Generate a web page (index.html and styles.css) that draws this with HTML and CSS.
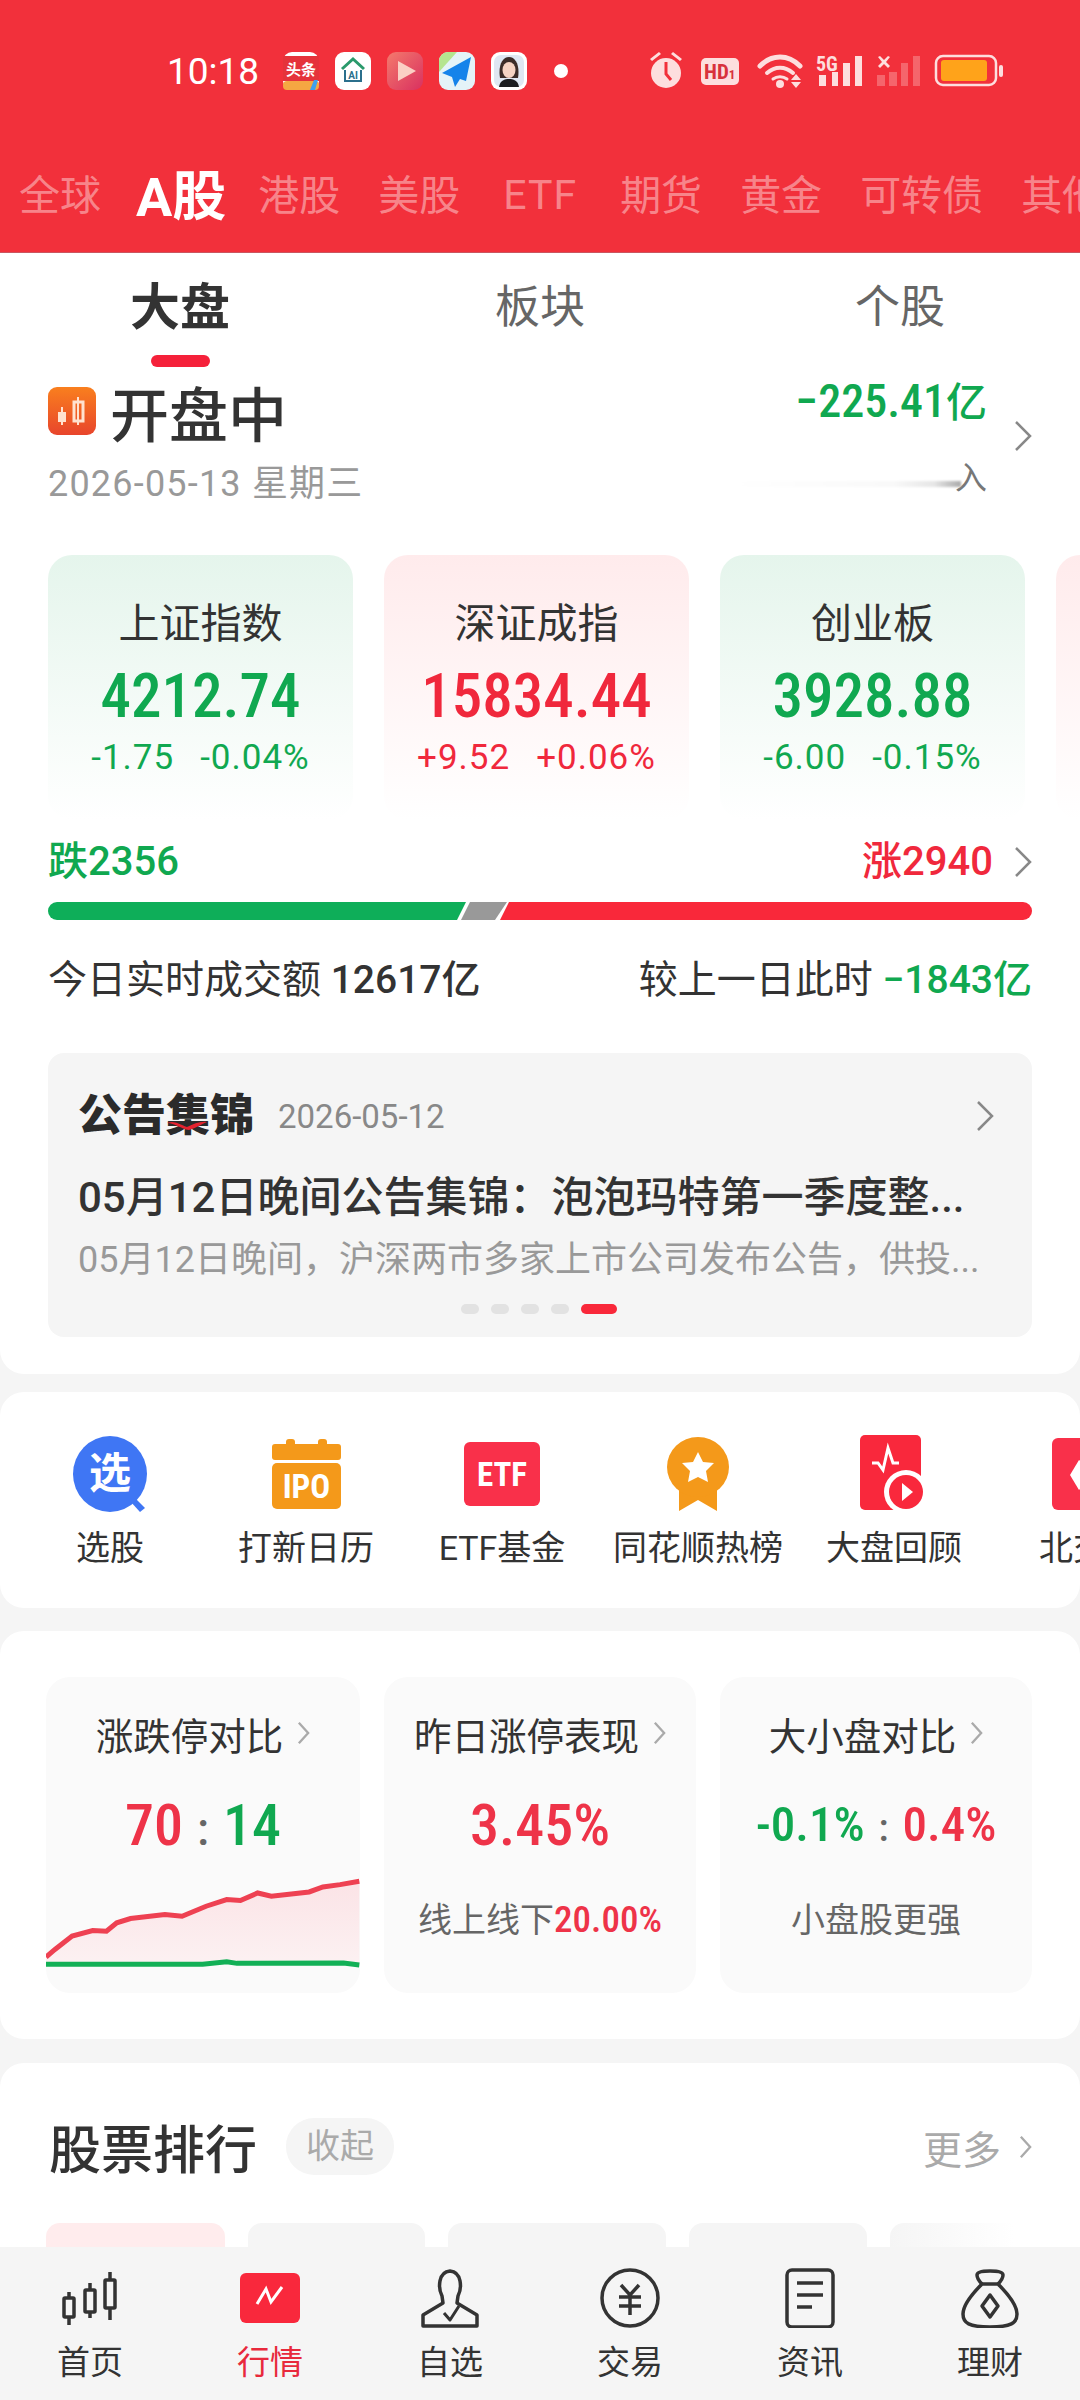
FILE: index.html
```html
<!DOCTYPE html>
<html lang="zh-CN">
<head>
  <meta charset="UTF-8">
  <title>行情</title>
  <link rel="stylesheet" href="styles.css">
</head>
<body>

<div class="main">

  <div class="header">
    <div class="status">
      <span class="time">10:18</span>
      <svg class="app" viewBox="0 0 36 38">
        <rect width="36" height="38" rx="9" fill="#fff"/>
        <rect y="4" width="36" height="25" fill="#e5333b"/>
        <text x="18" y="23" class="app-text" fill="#fff">头条</text>
        <rect y="29" width="36" height="9" rx="4" fill="#f5a742"/>
        <path d="M31 28l-4 10h5l3-10z" fill="#3fa0ef"/>
      </svg>
      <svg class="app" viewBox="0 0 36 38">
        <rect width="36" height="38" rx="9" fill="#fff"/>
        <path d="M7 17L18 7l11 10" fill="none" stroke="#2a9a6b" stroke-width="3"/>
        <path d="M10 18v11h16V18" fill="none" stroke="#2b6f8c" stroke-width="2"/>
        <text x="18" y="27" class="app-ai" fill="#2b6f8c">AI</text>
      </svg>
      <svg class="app" viewBox="0 0 36 38">
        <defs>
          <linearGradient id="playBg" x1="0" y1="0" x2="1" y2="1">
            <stop offset="0" stop-color="#f47a6c"/>
            <stop offset="1" stop-color="#d93060"/>
          </linearGradient>
        </defs>
        <rect width="36" height="38" rx="9" fill="url(#playBg)"/>
        <path d="M11 9l18 10-18 10z" fill="#fbcfc4"/>
      </svg>
      <svg class="app" viewBox="0 0 36 38">
        <rect width="36" height="38" rx="9" fill="#e4f3f8"/>
        <path d="M0 9a9 9 0 0 1 9-9h9L0 20z" fill="#b5e58f"/>
        <path d="M32 5L3 21l10 4 3 10 5-8 6 2z" fill="#1583ea"/>
      </svg>
      <svg class="app" viewBox="0 0 36 38">
        <rect width="36" height="38" rx="9" fill="#fff"/>
        <rect x="3" y="3" width="30" height="32" rx="7" fill="#dfe7f2"/>
        <path d="M9 26c-2-12 2-21 9-21s11 9 9 21z" fill="#3c2c28"/>
        <ellipse cx="18" cy="18" rx="6.5" ry="8" fill="#f5d3c3"/>
        <path d="M8 35c1-7 6-8 10-8s9 1 10 8z" fill="#1c1c1f"/>
      </svg>
      <span class="status-dot"></span>
      <svg class="status-right" viewBox="650 52 354 38">
        <g fill="#fddede">
          <circle cx="666" cy="73" r="15"/>
          <path d="M652 61l9-7-2-2-9 7zM680 61l-9-7 2-2 9 7z"/>
          <rect x="701" y="58" width="38" height="27" rx="5"/>
          <circle cx="780" cy="84" r="4"/>
          <path d="M796 74l5 6h-10zM796 88l5-6h-10z"/>
          <rect x="819" y="75" width="7" height="11"/>
          <rect x="832" y="72" width="6" height="14"/>
          <rect x="843" y="63" width="7" height="23"/>
          <rect x="855" y="56" width="7" height="30"/>
          <path d="M878 57l2-1 4 4 4-4 2 1-4 5 4 4-2 2-4-4-4 4-2-2 4-4z"/>
        </g>
        <path d="M666 62v12l5 6" fill="none" stroke="#f2303b" stroke-width="3"/>
        <text x="704" y="79" class="status-hd" fill="#d8323c">HD<tspan class="status-hd-sub">1</tspan></text>
        <text x="816" y="71" class="status-5g" fill="#fddede">5G</text>
        <g fill="none" stroke="#fddede" stroke-linecap="round">
          <path d="M760 66c12-12 28-12 40 0" stroke-width="5"/>
          <path d="M767 73c8-7 18-7 26 0" stroke-width="4"/>
          <path d="M773 79c4-3 10-3 14 0" stroke-width="3"/>
        </g>
        <g fill="#fddede" opacity=".3">
          <rect x="877" y="75" width="8" height="11"/>
          <rect x="889" y="72" width="8" height="14"/>
          <rect x="901" y="63" width="7" height="23"/>
          <rect x="913" y="56" width="7" height="30"/>
        </g>
        <rect x="936" y="56" width="60" height="29" rx="7" fill="none" stroke="#fddede" stroke-width="2.5"/>
        <rect x="941" y="60" width="46" height="21" rx="3" fill="#ffa31a"/>
        <rect x="999" y="65" width="4" height="12" rx="2" fill="#fddede"/>
      </svg>
    </div>
    <div class="market-tabs">
      <span>全球</span>
      <span class="on">A股</span>
      <span>港股</span>
      <span>美股</span>
      <span class="etf">ETF</span>
      <span>期货</span>
      <span>黄金</span>
      <span>可转债</span>
      <span>其他</span>
    </div>
  </div>

  <div class="sheet sheet-first">
    <div class="sub-tabs">
      <div class="sub-tab on">大盘<i></i></div>
      <div class="sub-tab">板块</div>
      <div class="sub-tab">个股</div>
    </div>

    <div class="open-row">
      <div>
        <div class="open-title">
          <svg class="open-icon" viewBox="0 0 48 48">
            <defs>
              <linearGradient id="openBg" x1="0" y1="0" x2="0" y2="1">
                <stop offset="0" stop-color="#f97f1e"/>
                <stop offset="1" stop-color="#e8452c"/>
              </linearGradient>
            </defs>
            <rect width="48" height="48" rx="9" fill="url(#openBg)"/>
            <path d="M14 20v18M30 10v28" stroke="#ffe2cf" stroke-width="2"/>
            <rect x="10" y="25" width="8" height="10" fill="#ffe2cf"/>
            <rect x="26" y="15" width="9" height="19" fill="none" stroke="#ffe2cf" stroke-width="3"/>
          </svg>
          开盘中
        </div>
        <div class="open-date">2026-05-13 星期三</div>
      </div>
      <div class="flow">
        <div class="flow-value"><span class="num flow-num">−225.41</span>亿</div>
        <div class="flow-label"><i></i>入</div>
      </div>
      <svg class="chev chev-flow" viewBox="0 0 18 32"><path d="M2 2l14 14L2 30"/></svg>
    </div>

    <div class="index-row">
      <div class="index-card down">
        <div class="index-name">上证指数</div>
        <div class="index-value num">4212.74</div>
        <div class="index-sub"><span>-1.75</span><span>-0.04%</span></div>
      </div>
      <div class="index-card up">
        <div class="index-name">深证成指</div>
        <div class="index-value num">15834.44</div>
        <div class="index-sub"><span>+9.52</span><span>+0.06%</span></div>
      </div>
      <div class="index-card down">
        <div class="index-name">创业板</div>
        <div class="index-value num">3928.88</div>
        <div class="index-sub"><span>-6.00</span><span>-0.15%</span></div>
      </div>
      <div class="index-card up"></div>
    </div>

    <div class="count-row">
      <span class="green">跌2356</span>
      <span class="count-right">
        <span class="red">涨2940</span>
        <svg class="chev" viewBox="0 0 18 32"><path d="M2 2l14 14L2 30"/></svg>
      </span>
    </div>
    <div class="ratio-bar">
      <div class="ratio-down" style="width:418px"></div>
      <div class="ratio-flat" style="width:49px"></div>
      <div class="ratio-up"></div>
    </div>

    <div class="turnover">
      <span>今日实时成交额 <b>12617亿</b></span>
      <span>较上一日此时 <b class="green">−1843亿</b></span>
    </div>

    <div class="notice">
      <div class="notice-head">
        <span class="notice-title">公告集锦<svg class="notice-swoosh" viewBox="0 0 42 10"><path d="M1 3c7-3 12 1 20 4 7-3 13-6 20-5-5 2-11 6-18 8C15 9 9 3 1 3z"/></svg></span>
        <span class="notice-date">2026-05-12</span>
        <svg class="chev" viewBox="0 0 18 32"><path d="M2 2l14 14L2 30"/></svg>
      </div>
      <div class="notice-line">05月12日晚间公告集锦：泡泡玛特第一季度整...</div>
      <div class="notice-desc">05月12日晚间，沪深两市多家上市公司发布公告，供投...</div>
      <div class="dots"><i></i><i></i><i></i><i></i><i class="on"></i></div>
    </div>
  </div>

  <div class="sheet shortcuts">
    <div class="shortcut">
      <div class="shortcut-icon">
        <svg width="75" height="76" viewBox="0 0 75 76">
          <path d="M62 62l10 10-5 4-10-11z" fill="#3f76f4"/>
          <ellipse cx="37" cy="38" rx="37" ry="38" fill="#3f76f4"/>
          <text x="37" y="52" class="shortcut-xuan" fill="#fff">选</text>
        </svg>
      </div>
      <div class="shortcut-label">选股</div>
    </div>
    <div class="shortcut">
      <div class="shortcut-icon">
        <svg width="69" height="70" viewBox="0 0 69 70">
          <rect x="14" y="0" width="9" height="10" rx="3" fill="#f4991a"/>
          <rect x="46" y="0" width="9" height="10" rx="3" fill="#f4991a"/>
          <rect y="5" width="69" height="16" rx="3" fill="#f4991a"/>
          <rect y="24" width="69" height="46" rx="5" fill="#f4991a"/>
          <text x="34.5" y="59" class="shortcut-tag" fill="#fff">IPO</text>
        </svg>
      </div>
      <div class="shortcut-label">打新日历</div>
    </div>
    <div class="shortcut">
      <div class="shortcut-icon">
        <svg width="76" height="64" viewBox="0 0 76 64">
          <rect width="76" height="64" rx="6" fill="#f9304a"/>
          <text x="38" y="44" class="shortcut-tag" fill="#fff">ETF</text>
        </svg>
      </div>
      <div class="shortcut-label">ETF基金</div>
    </div>
    <div class="shortcut">
      <div class="shortcut-icon">
        <svg width="62" height="74" viewBox="0 0 62 74">
          <path d="M12 40v34l19-11 19 11V40z" fill="#f4991a"/>
          <ellipse cx="31" cy="30" rx="31" ry="30" fill="#f4991a"/>
          <path d="M31 15l5 10 11 1-8 8 2 11-10-5-10 5 2-11-8-8 11-1z" fill="#fff"/>
        </svg>
      </div>
      <div class="shortcut-label">同花顺热榜</div>
    </div>
    <div class="shortcut">
      <div class="shortcut-icon">
        <svg width="68" height="79" viewBox="0 0 68 79">
          <rect width="61" height="75" rx="5" fill="#f9283c"/>
          <path d="M12 28h6l5 7 5-22 5 15h6" fill="none" stroke="#fff" stroke-width="3"/>
          <circle cx="46" cy="57" r="22" fill="#fff"/>
          <circle cx="46" cy="57" r="17" fill="#f9283c"/>
          <path d="M42 48l11 9-11 9z" fill="#fff"/>
        </svg>
      </div>
      <div class="shortcut-label">大盘回顾</div>
    </div>
    <div class="shortcut">
      <div class="shortcut-icon">
        <svg width="76" height="72" viewBox="0 0 76 72">
          <rect width="76" height="72" rx="6" fill="#f9304a"/>
          <path d="M27 22l18 14-18 16-9-15z" fill="#fff"/>
        </svg>
      </div>
      <div class="shortcut-label">北交所</div>
    </div>
  </div>

  <div class="sheet compare">
    <div class="compare-card">
      <div class="compare-title">涨跌停对比<svg class="chev-sm" viewBox="0 0 14 26"><path d="M2 2l10 11L2 24"/></svg></div>
      <div class="compare-value num"><span class="pink">70</span><span class="colon">:</span><span class="green">14</span></div>
      <svg class="compare-chart" viewBox="67 770 457 280" preserveAspectRatio="none">
        <defs>
          <linearGradient id="chartFill" x1="0" y1="0" x2="0" y2="1">
            <stop offset="0" stop-color="#fbe3e6"/>
            <stop offset="1" stop-color="#fcf1f2"/>
          </linearGradient>
        </defs>
        <path d="M67 1008L80 985L105 945L135 928L155 930L170 905L190 892L240 880L265 885L300 855L330 835L350 838L375 815L395 825L450 812L470 797L495 790L523 780V1030H67Z" fill="url(#chartFill)"/>
        <path class="line-red" d="M67 1008L80 985L105 945L135 928L155 930L170 905L190 892L240 880L265 885L300 855L330 835L350 838L375 815L395 825L450 812L470 797L495 790L523 780"/>
        <path class="line-green" d="M67 1030L295 1030L330 1022L345 1027L500 1026L523 1032"/>
      </svg>
    </div>
    <div class="compare-card">
      <div class="compare-title">昨日涨停表现<svg class="chev-sm" viewBox="0 0 14 26"><path d="M2 2l10 11L2 24"/></svg></div>
      <div class="compare-value num pink">3.45%</div>
      <div class="compare-foot">线上线下<span class="compare-rate num pink">20.00%</span></div>
    </div>
    <div class="compare-card">
      <div class="compare-title">大小盘对比<svg class="chev-sm" viewBox="0 0 14 26"><path d="M2 2l10 11L2 24"/></svg></div>
      <div class="compare-value compare-value-sm num"><span class="green">-0.1%</span><span class="colon">:</span><span class="pink">0.4%</span></div>
      <div class="compare-foot">小盘股更强</div>
    </div>
  </div>

  <div class="sheet ranking">
    <div class="ranking-head">
      <span class="ranking-title">股票排行</span>
      <span class="ranking-chip">收起</span>
      <span class="ranking-more">更多<svg class="chev-sm" viewBox="0 0 14 26"><path d="M2 2l10 11L2 24"/></svg></span>
    </div>
    <div class="ranking-tabs">
      <i class="on" style="width:179px"></i>
      <i style="width:177px"></i>
      <i style="width:218px"></i>
      <i style="width:178px"></i>
      <i class="fade" style="width:177px"></i>
    </div>
  </div>

</div>

<div class="nav">
  <div class="nav-item">
    <svg viewBox="0 0 60 60" fill="none" stroke="#333" stroke-width="3.5">
      <path d="M9 24v6M9 49v8M30 15v7M30 44v6M50 4v8M50 40v12"/>
      <rect x="4" y="30" width="10" height="19" rx="1"/>
      <rect x="25" y="22" width="10" height="22" rx="1"/>
      <rect x="45" y="12" width="10" height="28" rx="1"/>
    </svg>
    首页
  </div>
  <div class="nav-item on">
    <svg viewBox="0 0 60 60">
      <rect y="5" width="60" height="50" rx="6" fill="#f9283c"/>
      <path d="M17 36l9-15 5 13 11-15" fill="none" stroke="#fff" stroke-width="3"/>
    </svg>
    行情
  </div>
  <div class="nav-item">
    <svg viewBox="0 0 60 60" fill="none" stroke="#333" stroke-width="3.5" stroke-linejoin="round">
      <path d="M22 28c-4-8-4-24 8-25 12 1 12 17 8 25l-1 7 20 12v11H3V47l20-12z"/>
      <path d="M24 45l6 7 9-14" stroke-width="3"/>
    </svg>
    自选
  </div>
  <div class="nav-item">
    <svg viewBox="0 0 60 60" fill="none" stroke="#333" stroke-width="3.5">
      <ellipse cx="30" cy="30" rx="28" ry="28"/>
      <path d="M21 17l9 10 9-10M19 29h22M19 38h22M30 27v20"/>
    </svg>
    交易
  </div>
  <div class="nav-item">
    <svg viewBox="0 0 60 60" fill="none" stroke="#333" stroke-width="3.5">
      <rect x="7" y="2" width="46" height="57" rx="5"/>
      <path d="M17 15h26M17 27h26M17 39h15"/>
    </svg>
    资讯
  </div>
  <div class="nav-item">
    <svg viewBox="0 0 60 60" fill="none" stroke="#333" stroke-width="3.5" stroke-linejoin="round">
      <path d="M22 16c-3-3-5-6-5-9 0-3 5-4 13-4s13 1 13 4c0 3-2 6-5 9"/>
      <path d="M22 16h16c8 8 19 20 19 30 0 9-6 13-27 13S3 55 3 46c0-10 11-22 19-30z"/>
      <path d="M30 27l8 11-8 11-8-11z"/>
    </svg>
    理财
  </div>
</div>

</body>
</html>
```

FILE: styles.css
```css
html, body {
  margin: 0;
  padding: 0;
}

body {
  width: 1080px;
  height: 2400px;
  display: flex;
  flex-direction: column;
  overflow: hidden;
  background: #f5f5f5;
  color: #333;
  font-family: Roboto, "Noto Sans CJK SC", sans-serif;
}

.num {
  font-family: "Roboto Condensed", Roboto, "Noto Sans CJK SC", sans-serif;
}

.green {
  color: #10a850;
}

.red {
  color: #f0283c;
}

.pink {
  color: #ee3348;
}

.main {
  flex: 1;
  min-height: 0;
  overflow: hidden;
}

/* header */
.header {
  height: 252px;
  background: #f2303b;
  border-bottom: 1px solid #c95660;
  overflow: hidden;
}

.status {
  display: flex;
  align-items: center;
  gap: 16px;
  height: 40px;
  padding: 51px 0 0 167px;
}

.time {
  width: 93px;
  margin-right: 7px;
  font-size: 37px;
  color: #fff;
}

.app {
  width: 36px;
  height: 38px;
  flex: none;
}

.app-text {
  font-size: 15px;
  font-weight: 700;
  text-anchor: middle;
}

.app-ai {
  font-size: 10px;
  font-weight: 700;
  text-anchor: middle;
}

.status-dot {
  width: 14px;
  height: 14px;
  margin-left: 11px;
  border-radius: 50%;
  background: #fff;
}

.status-right {
  width: 354px;
  height: 38px;
  margin-left: 66px;
  flex: none;
}

.status-hd {
  font-family: "Roboto Condensed", Roboto, sans-serif;
  font-size: 21px;
  font-weight: 700;
}

.status-hd-sub {
  font-size: 13px;
}

.status-5g {
  font-family: "Roboto Condensed", Roboto, sans-serif;
  font-size: 20px;
  font-weight: 700;
}

.market-tabs {
  display: flex;
  align-items: center;
  gap: 38px;
  height: 50px;
  margin-top: 76px;
  padding-left: 19px;
  font-size: 41px;
  color: rgba(255, 255, 255, .42);
  white-space: nowrap;
}

.market-tabs .on {
  margin: 0 -6px 0 -3px;
  font-size: 54px;
  font-weight: 700;
  color: #fff;
}

.market-tabs .etf {
  margin: 6px 5px 0;
  letter-spacing: 1px;
}

/* white sheets */
.sheet {
  background: #fff;
  border-radius: 24px;
  overflow: hidden;
}

.sheet-first {
  padding-bottom: 37px;
  border-radius: 0 0 24px 24px;
}

.sub-tabs {
  display: flex;
  padding-top: 30px;
}

.sub-tab {
  width: 362.5px;
  height: 84px;
  font-size: 45px;
  line-height: 50px;
  color: #666;
  text-align: center;
}

.sub-tab.on {
  font-size: 50px;
  font-weight: 700;
  color: #333;
}

.sub-tab i {
  display: block;
  width: 59px;
  height: 12px;
  margin: 22px auto 0;
  border-radius: 6px;
  background: #f5213a;
}

.open-row {
  display: flex;
  align-items: center;
  margin-top: 19px;
  padding: 0 48px;
}

.open-title {
  display: flex;
  align-items: center;
  gap: 14px;
  height: 62px;
  margin-top: -6px;
  font-size: 59px;
  font-weight: 500;
}

.open-icon {
  width: 48px;
  height: 48px;
}

.open-date {
  margin-top: 23px;
  font-size: 36px;
  letter-spacing: 1.2px;
  line-height: 38px;
  color: #999;
}

.flow {
  margin-left: auto;
  margin-right: 27px;
  text-align: right;
}

.flow-value {
  margin-top: -16px;
  font-size: 41px;
  font-weight: 500;
  line-height: 48px;
  color: #10a850;
}

.flow-num {
  font-size: 46px;
}

.flow-label {
  display: flex;
  align-items: center;
  justify-content: flex-end;
  margin-top: 32px;
  font-size: 32px;
  line-height: 38px;
  color: #777;
}

.flow-label i {
  width: 224px;
  height: 6px;
  margin: 12px -6px 0 0;
  background: linear-gradient(90deg, #fff 0%, #f9f9f9 70%, #e6e6e6 88%, #aaa 100%);
  filter: blur(1px);
}

.chev {
  width: 18px;
  height: 32px;
  flex: none;
  fill: none;
  stroke: #888;
  stroke-width: 2.5;
}

.chev-flow {
  margin-top: -18px;
}

.chev-sm {
  width: 13px;
  height: 26px;
  margin-left: 14px;
  fill: none;
  stroke: #aaa;
  stroke-width: 2.5;
}

.index-row {
  display: flex;
  gap: 31px;
  margin-top: 52px;
  padding-left: 48px;
}

.index-card {
  flex: none;
  width: 305px;
  height: 265px;
  border-radius: 24px;
  text-align: center;
  overflow: hidden;
}

.index-card.down {
  background: linear-gradient(#e5f5ec, #fff);
  color: #10a850;
}

.index-card.up {
  background: linear-gradient(#ffebec, #fff);
  color: #f0283c;
}

.index-name {
  padding-top: 47px;
  font-size: 41px;
  line-height: 44px;
  color: #333;
}

.index-value {
  margin-top: 15px;
  font-size: 61px;
  font-weight: 500;
  line-height: 70px;
}

.index-sub {
  display: flex;
  justify-content: center;
  gap: 26px;
  margin-top: 9px;
  font-size: 35px;
  letter-spacing: 1px;
  line-height: 36px;
}

.count-row {
  display: flex;
  justify-content: space-between;
  align-items: center;
  margin-top: 22px;
  padding: 0 48px;
  font-size: 40px;
  font-weight: 500;
  line-height: 40px;
}

.count-right {
  display: flex;
  align-items: center;
  gap: 21px;
}

.ratio-bar {
  display: flex;
  height: 18px;
  margin: 20px 48px 0;
  border-radius: 9px;
  overflow: hidden;
}

.ratio-down {
  background: #0eae59;
  clip-path: polygon(0 0, 100% 0, calc(100% - 9px) 100%, 0 100%);
}

.ratio-flat {
  margin-left: -8px;
  background: #999;
  clip-path: polygon(12px 0, 100% 0, calc(100% - 12px) 100%, 3px 100%);
}

.ratio-up {
  flex: 1;
  margin-left: -7px;
  background: #f9283a;
  clip-path: polygon(9px 0, 100% 0, 100% 100%, 0 100%);
}

.turnover {
  display: flex;
  justify-content: space-between;
  margin-top: 40px;
  padding: 0 48px;
  font-size: 39px;
  line-height: 40px;
}

.turnover b {
  font-weight: 500;
}

.notice {
  height: 284px;
  margin: 53px 48px 0;
  padding: 40px 38px 0 30px;
  box-sizing: border-box;
  border-radius: 16px;
  background: #f5f5f5;
}

.notice-head {
  display: flex;
  align-items: center;
  height: 46px;
}

.notice-title {
  position: relative;
  font-size: 44px;
  font-weight: 900;
  line-height: 46px;
  color: #2b2b2b;
}

.notice-swoosh {
  position: absolute;
  left: 88px;
  top: 27px;
  width: 42px;
  height: 10px;
  fill: #e5232f;
}

.notice-date {
  margin-left: 24px;
  font-size: 33px;
  color: #888;
}

.notice-head .chev {
  margin-left: auto;
}

.notice-line {
  margin-top: 38px;
  font-size: 42px;
  font-weight: 500;
  line-height: 42px;
  white-space: nowrap;
}

.notice-desc {
  margin-top: 22px;
  font-size: 36px;
  line-height: 38px;
  color: #999;
  white-space: nowrap;
}

.dots {
  display: flex;
  justify-content: center;
  gap: 12px;
  margin: 25px 0 0 6px;
}

.dots i {
  width: 18px;
  height: 10px;
  border-radius: 5px;
  background: #e2e2e2;
}

.dots i.on {
  width: 36px;
  background: #f9283a;
}

/* shortcuts */
.shortcuts {
  display: grid;
  grid-template-columns: repeat(6, 196px);
  height: 175px;
  margin-top: 18px;
  padding: 41px 0 0 12px;
  border-radius: 24px;
}

.shortcut {
  text-align: center;
  white-space: nowrap;
}

.shortcut-icon {
  display: flex;
  align-items: center;
  justify-content: center;
  height: 82px;
}

.shortcut-label {
  margin-top: 14px;
  font-size: 34px;
  line-height: 38px;
}

.shortcut-xuan {
  font-size: 42px;
  font-weight: 700;
  text-anchor: middle;
}

.shortcut-tag {
  font-family: "Roboto Condensed", Roboto, sans-serif;
  font-size: 33px;
  font-weight: 700;
  text-anchor: middle;
}

/* compare cards */
.compare {
  display: grid;
  grid-template-columns: 314px 312px 312px;
  gap: 24px;
  height: 316px;
  margin-top: 23px;
  padding: 46px 48px 46px 46px;
}

.compare-card {
  height: 316px;
  border-radius: 24px;
  background: #fafafa;
  text-align: center;
  overflow: hidden;
}

.compare-title {
  display: flex;
  align-items: center;
  justify-content: center;
  height: 40px;
  padding-top: 36px;
  font-size: 37.5px;
}

.compare-value {
  height: 60px;
  margin-top: 42px;
  font-size: 58px;
  font-weight: 500;
  line-height: 60px;
}

.compare-value-sm {
  font-size: 49px;
}

.colon {
  margin: 0 14px;
  font-size: .8em;
  color: #666;
}

.compare-chart {
  display: block;
  width: 314px;
  height: 93px;
  margin-top: 23px;
}

.line-red,
.line-green {
  fill: none;
  stroke-width: 5;
  vector-effect: non-scaling-stroke;
}

.line-red {
  stroke: #ee4152;
}

.line-green {
  stroke: #12b056;
}

.compare-foot {
  margin-top: 45px;
  font-size: 34px;
  line-height: 40px;
  color: #666;
}

.compare-rate {
  font-size: 37px;
  font-weight: 500;
}

/* ranking */
.ranking {
  margin-top: 24px;
  padding-top: 55px;
  height: 200px;
}

.ranking-head {
  display: flex;
  align-items: center;
  height: 57px;
  padding: 0 48px 0 49px;
}

.ranking-title {
  font-size: 52px;
  font-weight: 500;
}

.ranking-chip {
  margin-left: 29px;
  padding: 0 20px;
  border-radius: 28px;
  background: #f5f5f5;
  font-size: 34px;
  line-height: 57px;
  color: #aaa;
}

.ranking-more {
  display: flex;
  align-items: center;
  margin-left: auto;
  font-size: 39px;
  color: #aaa;
}

.ranking-more .chev-sm {
  height: 30px;
  margin-left: 18px;
}

.ranking-tabs {
  display: flex;
  gap: 23px;
  margin-top: 48px;
  padding-left: 46px;
}

.ranking-tabs i {
  flex: none;
  height: 60px;
  border-radius: 14px;
  background: #f5f5f5;
}

.ranking-tabs i.on {
  background: #ffeced;
}

.ranking-tabs i.fade {
  background: linear-gradient(90deg, #f5f5f5, #fff 70%);
}

/* bottom nav */
.nav {
  display: grid;
  grid-template-columns: repeat(6, 180px);
  height: 153px;
  background: #f5f5f5;
}

.nav-item {
  padding-top: 21px;
  font-size: 33px;
  line-height: 40px;
  text-align: center;
}

.nav-item svg {
  display: block;
  width: 60px;
  height: 60px;
  margin: 0 auto 15px;
}

.nav-item.on {
  color: #e8293c;
}
```
